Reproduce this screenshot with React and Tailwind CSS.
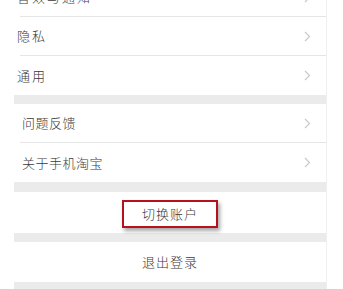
export default function App() {
  const font = { fontFamily: '"Noto Sans CJK SC", "Noto Sans", sans-serif' };
  const Chevron = () => (
    <svg width="7" height="11" viewBox="0 0 7 11" className="mr-[15px]">
      <path d="M1 1 L5.5 5.5 L1 10" fill="none" stroke="#c9c9c9" strokeWidth="1.2" />
    </svg>
  );
  const TopRow = ({ label, border, h }) => (
    <div className={`flex items-center justify-between bg-white ${h}`}>
      <div className={`flex h-full flex-1 items-center justify-between ${border ? 'border-b border-[#e6e6e6] ml-[6px]' : 'ml-[6px]'}`}>
        <span className="-ml-[3px] text-[13px] font-light tracking-[2px] text-[#3a3a3a]">{label}</span>
        <Chevron />
      </div>
    </div>
  );
  const BotRow = ({ label, border, h }) => (
    <div className={`flex items-center bg-white ${h}`}>
      <div className={`flex h-full flex-1 items-center justify-between ml-[6px] ${border ? 'border-b border-[#e6e6e6]' : ''}`}>
        <span className="ml-[2px] text-[13px] font-light tracking-[0.5px] text-[#3a3a3a]">{label}</span>
        <Chevron />
      </div>
    </div>
  );
  return (
    <div className="h-[289px] w-[343px] overflow-hidden bg-white" style={font}>
      <div className="-mt-[22px] ml-[14px] w-[313px] border-r border-[#f0f0f0]">
        <div className="w-[312px]">
          <TopRow label="音效与通知" border h="h-[39px]" />
          <TopRow label="隐私" border h="h-[39px]" />
          <TopRow label="通用" h="h-[39px]" />
          <div className="h-[9px] bg-[#ebebeb]" />
          <BotRow label="问题反馈" border h="h-[39px]" />
          <BotRow label="关于手机淘宝" h="h-[39px]" />
          <div className="h-[10px] bg-[#ebebeb]" />
          <div className="flex h-[41px] items-center justify-center bg-white">
            <div className="mt-[3px] flex h-[28px] w-[96px] items-center justify-center border-2 border-[#b5121b] shadow-[2px_3px_4px_rgba(0,0,0,0.35)]">
              <span className="text-[13px] font-light tracking-[1px] text-[#3a3a3a]">切换账户</span>
            </div>
          </div>
          <div className="h-[9px] bg-[#ebebeb]" />
          <div className="flex h-[40px] items-center justify-center bg-white">
            <span className="text-[13px] font-light tracking-[1px] text-[#3a3a3a]">退出登录</span>
          </div>
          <div className="h-[10px] bg-[#ebebeb]" />
        </div>
      </div>
    </div>
  );
}
